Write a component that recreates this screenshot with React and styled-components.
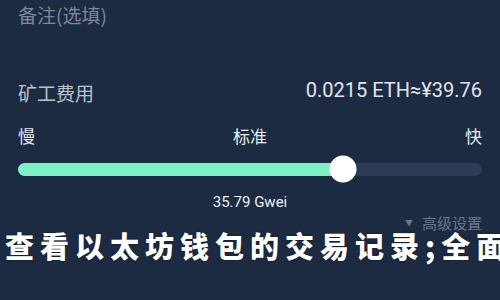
import * as React from "react";
import styled, { createGlobalStyle } from "styled-components";

const GlobalStyle = createGlobalStyle`
  html, body {
    margin: 0;
    padding: 0;
    background: #1c2b42;
  }
  body {
    font-family: "Noto Sans CJK SC", Roboto, sans-serif;
  }
`;

const Screen = styled.div`
  position: relative;
  width: 500px;
  height: 300px;
  overflow: hidden;
  background: #1c2b42;
  box-sizing: border-box;
  padding: 5px 18px 0;
  display: flex;
  flex-direction: column;
`;

const Remark = styled.div`
  font-size: 19px;
  line-height: 1;
  color: #7f8898;
`;

const FeeRow = styled.div`
  margin-top: 59px;
  display: flex;
  justify-content: space-between;
  align-items: center;
  height: 19px;
`;

const FeeLabel = styled.div`
  font-size: 19px;
  line-height: 1;
  color: #bcc2cc;
`;

const FeeAmount = styled.div`
  font-family: Roboto, "Noto Sans CJK SC", sans-serif;
  font-size: 20px;
  line-height: 1;
  color: #e2e6ec;
  margin-top: -6px;
`;

const SpeedRow = styled.div`
  margin-top: 25px;
  display: flex;
  justify-content: space-between;
  font-size: 17px;
  line-height: 1;
  color: #e8ebf0;
`;

const SliderBox = styled.div`
  position: relative;
  margin-top: 11px;
  height: 28px;
  display: flex;
  align-items: center;
`;

const Track = styled.div`
  position: relative;
  width: 100%;
  height: 13px;
  border-radius: 7px;
  background: #2d3c55;
`;

const Fill = styled.div`
  height: 100%;
  border-radius: 7px;
  background: #7ef2c7;
`;

const Knob = styled.div`
  position: absolute;
  top: 50%;
  width: 27px;
  height: 27px;
  border-radius: 50%;
  background: #ffffff;
  transform: translate(-50%, -50%);
`;

const GasValue = styled.div`
  margin-top: 12px;
  text-align: center;
  font-family: Roboto, sans-serif;
  font-size: 15px;
  line-height: 1;
  color: #eef0f4;
`;

const Advanced = styled.div`
  margin-top: 5px;
  align-self: flex-end;
  display: flex;
  align-items: center;
  gap: 9px;
  font-size: 15px;
  line-height: 1;
  color: #6c7689;
`;

const Caret = styled.span`
  font-size: 8px;
`;

const Banner = styled.div`
  position: absolute;
  left: 5px;
  top: 231px;
  white-space: nowrap;
  font-family: "Noto Sans CJK SC", sans-serif;
  font-weight: 900;
  font-size: 29px;
  line-height: 1;
  letter-spacing: 6px;
  color: #ffffff;
  text-shadow: 0 0 2px rgba(0, 0, 0, 0.6);
`;

export default function App() {
  const level = 0.7;
  return (
    <>
      <GlobalStyle />
      <Screen>
        <Remark>备注(选填)</Remark>
        <FeeRow>
          <FeeLabel>矿工费用</FeeLabel>
          <FeeAmount>0.0215 ETH≈¥39.76</FeeAmount>
        </FeeRow>
        <SpeedRow>
          <span>慢</span>
          <span>标准</span>
          <span>快</span>
        </SpeedRow>
        <SliderBox>
          <Track>
            <Fill style={{ width: `${level * 100}%` }} />
            <Knob style={{ left: `${level * 100}%` }} />
          </Track>
        </SliderBox>
        <GasValue>35.79 Gwei</GasValue>
        <Advanced>
          <Caret>▼</Caret>
          <span>高级设置</span>
        </Advanced>
        <Banner>查看以太坊钱包的交易记录;全面</Banner>
      </Screen>
    </>
  );
}
